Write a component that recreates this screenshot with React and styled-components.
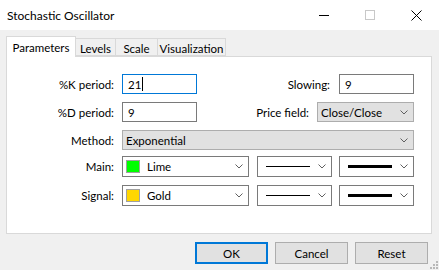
import React from "react";
import styled, { createGlobalStyle } from "styled-components";

const GlobalStyle = createGlobalStyle`
  html, body {
    margin: 0;
    padding: 0;
    background: #f0f0f0;
  }
  body {
    font-family: "Segoe UI", Lato, "Noto Sans", sans-serif;
    font-size: 11.5px;
    color: #000;
  }
`;

const Chevron = () => (
  <svg width="8" height="5" viewBox="0 0 8 5">
    <path d="M0.5 0.5 L4 4 L7.5 0.5" fill="none" stroke="#606060" strokeWidth="1" />
  </svg>
);

const tabs = [
  { name: "Parameters", width: 70, active: true },
  { name: "Levels", width: 40 },
  { name: "Scale", width: 42 },
  { name: "Visualization", width: 68 },
];

const LineRow = () => (
  <>
    <StyleSelect width={75} gapLeft={8}>
      <Line thickness={1} />
      <Chevron />
    </StyleSelect>
    <StyleSelect width={75} gapLeft={7}>
      <Line thickness={3} />
      <Chevron />
    </StyleSelect>
  </>
);

const App = () => {
  return (
    <Dialog>
      <GlobalStyle />
      <TitleBar>
        <Title>Stochastic Oscillator</Title>
        <WinButtons>
          <WinBtn>
            <svg width="10" height="10" viewBox="0 0 10 10">
              <path d="M0 5.5 H10" stroke="#000" strokeWidth="1" />
            </svg>
          </WinBtn>
          <WinBtn>
            <svg width="10" height="10" viewBox="0 0 10 10">
              <rect x="0.5" y="0.5" width="9" height="9" fill="none" stroke="#c8c8c8" />
            </svg>
          </WinBtn>
          <WinBtn>
            <svg width="11" height="11" viewBox="0 0 11 11">
              <path d="M0.5 0.5 L10.5 10.5 M10.5 0.5 L0.5 10.5" stroke="#000" strokeWidth="1" />
            </svg>
          </WinBtn>
        </WinButtons>
      </TitleBar>

      <Body>
        <Tabs>
          {tabs.map((t) => (
            <Tab key={t.name} active={t.active} width={t.width}>
              {t.name}
            </Tab>
          ))}
        </Tabs>

        <Panel>
          <Row>
            <Label>%K period:</Label>
            <Input focused>
              21<Caret />
            </Input>
            <Spacer />
            <Label auto>Slowing:</Label>
            <Input gapLeft={9}>9</Input>
          </Row>
          <Row>
            <Label>%D period:</Label>
            <Input>9</Input>
            <Spacer />
            <Label auto>Price field:</Label>
            <Select width={97} gapLeft={8}>
              <span>Close/Close</span>
              <Chevron />
            </Select>
          </Row>
          <Row>
            <Label>Method:</Label>
            <Select grow>
              <span>Exponential</span>
              <Chevron />
            </Select>
          </Row>
          <Row tall first>
            <Label>Main:</Label>
            <StyleSelect width={127}>
              <ColorValue>
                <Swatch color="#00ff00" />
                Lime
              </ColorValue>
              <Chevron />
            </StyleSelect>
            <LineRow />
          </Row>
          <Row tall>
            <Label>Signal:</Label>
            <StyleSelect width={127}>
              <ColorValue>
                <Swatch color="#ffd700" />
                Gold
              </ColorValue>
              <Chevron />
            </StyleSelect>
            <LineRow />
          </Row>
        </Panel>

        <Footer>
          <Button primary>OK</Button>
          <Button>Cancel</Button>
          <Button>Reset</Button>
        </Footer>
        <Grip>
          <svg width="8" height="8" viewBox="0 0 8 8">
            <g fill="#b8b8b8">
              <rect x="6" y="0" width="2" height="2" />
              <rect x="3" y="3" width="2" height="2" />
              <rect x="6" y="3" width="2" height="2" />
              <rect x="0" y="6" width="2" height="2" />
              <rect x="3" y="6" width="2" height="2" />
              <rect x="6" y="6" width="2" height="2" />
            </g>
          </svg>
        </Grip>
      </Body>
    </Dialog>
  );
};

const Dialog = styled.div`
  width: 439px;
  height: 270px;
  display: flex;
  flex-direction: column;
  background: #f0f0f0;
  overflow: hidden;
`;

const TitleBar = styled.div`
  height: 30px;
  background: #fff;
  display: flex;
  align-items: center;
  justify-content: space-between;
`;

const Title = styled.div`
  padding-left: 7px;
  font-size: 12px;
`;

const WinButtons = styled.div`
  display: flex;
  height: 100%;
`;

const WinBtn = styled.div`
  width: 46px;
  display: flex;
  align-items: center;
  justify-content: center;
`;

const Body = styled.div`
  position: relative;
  flex: 1;
  padding: 7px 7px 0 6px;
  display: flex;
  flex-direction: column;
`;

const Tabs = styled.div`
  display: flex;
  align-items: flex-end;
  height: 20px;
  position: relative;
  z-index: 1;
  margin-bottom: -1px;
`;

const Tab = styled.div`
  box-sizing: border-box;
  width: ${(p) => p.width}px;
  height: ${(p) => (p.active ? "21px" : "18px")};
  padding-top: ${(p) => (p.active ? "0" : "2px")};
  display: flex;
  align-items: center;
  justify-content: center;
  white-space: nowrap;
  border: 1px solid #d9d9d9;
  border-bottom: ${(p) => (p.active ? "none" : "1px solid #d9d9d9")};
  border-left: ${(p) => (p.active ? "1px solid #d9d9d9" : "none")};
  background: ${(p) => (p.active ? "#fff" : "#f0f0f0")};
  margin-bottom: ${(p) => (p.active ? "0" : "1px")};
`;

const Panel = styled.div`
  box-sizing: border-box;
  height: 178px;
  width: 426px;
  background: #fff;
  border: 1px solid #d9d9d9;
  padding: 17px 17px 0 0;
  display: flex;
  flex-direction: column;
`;

const Row = styled.div`
  display: flex;
  align-items: center;
  height: ${(p) => (p.tall ? "21px" : "20px")};
  margin-bottom: 8px;
  margin-top: ${(p) => (p.first ? "-2px" : "0")};
`;

const Label = styled.div`
  width: ${(p) => (p.auto ? "auto" : "107px")};
  text-align: right;
  margin-right: ${(p) => (p.auto ? "0" : "8px")};
  white-space: nowrap;
`;

const Spacer = styled.div`
  flex: 1;
`;

const Input = styled.div`
  box-sizing: border-box;
  width: 75px;
  height: 20px;
  margin-left: ${(p) => p.gapLeft || 0}px;
  border: 1px solid ${(p) => (p.focused ? "#0078d7" : "#7a7a7a")};
  background: #fff;
  padding-left: 5px;
  display: flex;
  align-items: center;
`;

const Caret = styled.span`
  display: inline-block;
  width: 1px;
  height: 14px;
  background: #000;
  margin-left: 1px;
`;

const Select = styled.div`
  box-sizing: border-box;
  width: ${(p) => (p.grow ? "auto" : `${p.width}px`)};
  flex: ${(p) => (p.grow ? "1" : "none")};
  margin-left: ${(p) => p.gapLeft || 0}px;
  height: 20px;
  background: #e1e1e1;
  border: 1px solid #adadad;
  padding: 0 5px 0 3px;
  display: flex;
  align-items: center;
  justify-content: space-between;
`;

const StyleSelect = styled.div`
  box-sizing: border-box;
  width: ${(p) => p.width}px;
  margin-left: ${(p) => p.gapLeft || 0}px;
  height: 21px;
  background: #fff;
  border: 1px solid #7a7a7a;
  padding: 0 5px 0 3px;
  display: flex;
  align-items: center;
  justify-content: space-between;
`;

const ColorValue = styled.div`
  display: flex;
  align-items: center;
  gap: 7px;
`;

const Swatch = styled.span`
  box-sizing: border-box;
  width: 14px;
  height: 13px;
  background: ${(p) => p.color};
  border: 1px solid #a0a0a0;
`;

const Line = styled.span`
  width: 44px;
  height: ${(p) => p.thickness}px;
  background: #000;
  margin-left: 5px;
`;

const Footer = styled.div`
  display: flex;
  justify-content: flex-end;
  gap: 7px;
  padding-top: 8px;
  padding-right: 4px;
`;

const Button = styled.div`
  box-sizing: border-box;
  width: 73px;
  height: 22px;
  background: #e1e1e1;
  border: ${(p) => (p.primary ? "2px solid #0078d7" : "1px solid #adadad")};
  display: flex;
  align-items: center;
  justify-content: center;
`;

const Grip = styled.div`
  position: absolute;
  right: 1px;
  bottom: 1px;
  line-height: 0;
`;

export default App;
